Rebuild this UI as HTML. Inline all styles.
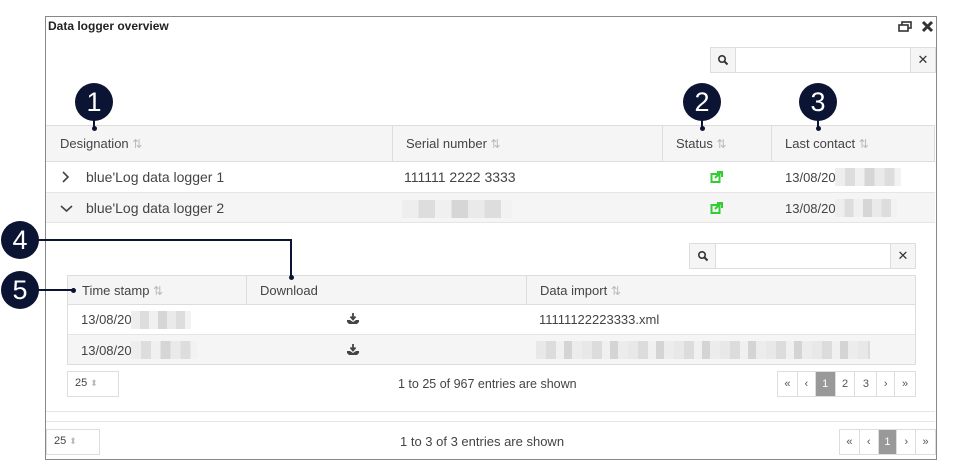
<!DOCTYPE html>
<html><head><meta charset="utf-8"><style>
*{box-sizing:border-box;margin:0;padding:0}
body{width:975px;height:475px;background:#fff;font-family:"Liberation Sans",sans-serif;position:relative;overflow:hidden;color:#333}
.a{position:absolute}
.t{font-size:13px;color:#444;white-space:nowrap}
.circ{position:absolute;width:38px;height:38px;border-radius:50%;background:#0b1433;color:#fff;font-size:27px;text-align:center;line-height:38px}
.dot{position:absolute;width:5px;height:5px;border-radius:50%;background:#0b1433}
.ln{position:absolute;background:#0b1433}
.s{color:#bbb;font-size:12px}
.blur{position:absolute;height:18px;background:linear-gradient(90deg,#eee 0 15%,#ddd 15% 30%,#f0f0f0 30% 45%,#d6d6d6 45% 60%,#eaeaea 60% 75%,#ddd 75% 90%,#f2f2f2 90%)}
.blur2{position:absolute;height:18px;background:repeating-linear-gradient(90deg,#e8e8e8 0 10px,#dcdcdc 10px 20px,#f0f0f0 20px 28px,#d4d4d4 28px 36px,#ececec 36px 46px)}
.pg{position:absolute;display:flex;border:1px solid #ddd;height:26px}
.pg div{border-right:1px solid #ddd;font-size:11px;color:#555;text-align:center;line-height:24px}
.pg div:last-child{border-right:none}
.pg .on{background:#999;color:#fff}
.box{position:absolute;border:1px solid #ddd}
</style></head><body>
<div class="a" style="left:45px;top:16px;width:892px;height:444px;border:1px solid #888"></div>
<div class="a" style="left:48px;top:19px;font-size:12px;font-weight:bold;color:#222">Data logger overview</div>
<svg class="a" style="left:898px;top:21px" width="14" height="12"><rect x="4" y="1" width="9" height="6" fill="none" stroke="#333" stroke-width="1.6"/><rect x="1" y="4" width="9" height="6" fill="#fff" stroke="#333" stroke-width="1.6"/></svg>
<svg class="a" style="left:921px;top:20px" width="13" height="13"><path d="M2 2L11 11M11 2L2 11" stroke="#333" stroke-width="3"/></svg>

<div class="box" style="left:710px;top:47px;width:226px;height:26px"></div>
<div class="a" style="left:710px;top:47px;width:26px;height:26px;background:#f5f5f5;border:1px solid #ddd"></div>
<div class="a" style="left:910px;top:47px;width:26px;height:26px;background:#f5f5f5;border:1px solid #ddd;text-align:center;line-height:24px;font-size:13px">✕</div>
<svg class="a" style="left:717px;top:54px" width="12" height="12"><circle cx="5" cy="5" r="3.2" fill="none" stroke="#333" stroke-width="1.6"/><path d="M7.5 7.5L10.5 10.5" stroke="#333" stroke-width="2"/></svg>

<div class="a" style="left:46px;top:125px;width:889px;height:37px;background:#f5f5f5;border-top:1px solid #ddd;border-bottom:1px solid #ddd"></div>
<div class="a" style="left:392px;top:126px;width:1px;height:35px;background:#ddd"></div>
<div class="a" style="left:662px;top:126px;width:1px;height:35px;background:#ddd"></div>
<div class="a" style="left:771px;top:126px;width:1px;height:35px;background:#ddd"></div>
<div class="a" style="left:934px;top:126px;width:1px;height:35px;background:#ddd"></div>
<div class="a t" style="left:60px;top:136px">Designation <span class="s">⇅</span></div>
<div class="a t" style="left:406px;top:136px">Serial number <span class="s">⇅</span></div>
<div class="a t" style="left:676px;top:136px">Status <span class="s">⇅</span></div>
<div class="a t" style="left:785px;top:136px">Last contact <span class="s">⇅</span></div>
<div class="a" style="left:46px;top:192px;width:889px;height:31px;background:#f5f5f5;border-top:1px solid #e5e5e5;border-bottom:1px solid #e5e5e5"></div>
<svg class="a" style="left:61px;top:171px" width="10" height="12"><path d="M2 1L7 6 2 11" stroke="#444" stroke-width="1.6" fill="none"/></svg>
<div class="a t" style="left:86px;top:169px;font-size:14px">blue'Log data logger 1</div>
<svg class="a" style="left:60px;top:204px" width="13" height="9"><path d="M1 2L6.5 7 12 2" stroke="#444" stroke-width="1.6" fill="none"/></svg>
<div class="a t" style="left:86px;top:200px;font-size:14px">blue'Log data logger 2</div>
<div class="a t" style="left:404px;top:169px;font-size:14px">111111 2222 3333</div>
<div class="blur" style="left:402px;top:200px;width:110px"></div>
<svg class="a" style="left:710px;top:171px" width="13" height="12"><rect x="1.5" y="3" width="8" height="8" fill="none" stroke="#3c3" stroke-width="2"/><path d="M5 7L11 1M7 1h5v5" stroke="#3c3" stroke-width="2" fill="none"/></svg>
<svg class="a" style="left:710px;top:202px" width="13" height="12"><rect x="1.5" y="3" width="8" height="8" fill="none" stroke="#3c3" stroke-width="2"/><path d="M5 7L11 1M7 1h5v5" stroke="#3c3" stroke-width="2" fill="none"/></svg>
<div class="a t" style="left:785px;top:170px">13/08/20</div><div class="blur" style="left:835px;top:168px;width:66px"></div>
<div class="a t" style="left:785px;top:201px">13/08/20</div><div class="blur" style="left:835px;top:199px;width:62px"></div>

<div class="box" style="left:689px;top:243px;width:227px;height:26px"></div>
<div class="a" style="left:689px;top:243px;width:27px;height:26px;background:#f5f5f5;border:1px solid #ddd"></div>
<div class="a" style="left:890px;top:243px;width:26px;height:26px;background:#f5f5f5;border:1px solid #ddd;text-align:center;line-height:24px;font-size:13px">✕</div>
<svg class="a" style="left:697px;top:250px" width="12" height="12"><circle cx="5" cy="5" r="3.2" fill="none" stroke="#333" stroke-width="1.6"/><path d="M7.5 7.5L10.5 10.5" stroke="#333" stroke-width="2"/></svg>

<div class="a" style="left:67px;top:275px;width:849px;height:90px;border:1px solid #ddd"></div>
<div class="a" style="left:68px;top:276px;width:847px;height:29px;background:#f5f5f5;border-bottom:1px solid #ddd"></div>
<div class="a" style="left:246px;top:276px;width:1px;height:28px;background:#ddd"></div>
<div class="a" style="left:526px;top:276px;width:1px;height:28px;background:#ddd"></div>
<div class="a" style="left:68px;top:334px;width:847px;height:30px;background:#f5f5f5;border-top:1px solid #e5e5e5"></div>
<div class="a t" style="left:82px;top:283px">Time stamp <span class="s">⇅</span></div>
<div class="a t" style="left:260px;top:283px">Download</div>
<div class="a t" style="left:540px;top:283px">Data import <span class="s">⇅</span></div>
<div class="a t" style="left:81px;top:312px">13/08/20</div><div class="blur" style="left:131px;top:311px;width:60px"></div>
<div class="a t" style="left:81px;top:343px">13/08/20</div><div class="blur" style="left:131px;top:341px;width:66px"></div>
<svg class="a" style="left:346px;top:313px" width="14" height="12"><path d="M7 0v6M4.5 3.5L7 6.5 9.5 3.5" stroke="#444" stroke-width="1.8" fill="none"/><path d="M1 7h3l3 2 3-2h3v2l-2 2H3L1 9z" fill="#444"/></svg>
<svg class="a" style="left:346px;top:344px" width="14" height="12"><path d="M7 0v6M4.5 3.5L7 6.5 9.5 3.5" stroke="#444" stroke-width="1.8" fill="none"/><path d="M1 7h3l3 2 3-2h3v2l-2 2H3L1 9z" fill="#444"/></svg>
<div class="a t" style="left:539px;top:312px">11111122223333.xml</div>
<div class="blur2" style="left:536px;top:341px;width:334px"></div>

<div class="box" style="left:67px;top:371px;width:52px;height:26px"></div>
<div class="a" style="left:75px;top:377px;font-size:11px;color:#444">25 <span style="color:#bbb;font-size:9px">⬍</span></div>
<div class="a t" style="left:398px;top:377px;font-size:12.5px">1 to 25 of 967 entries are shown</div>
<div class="pg" style="left:777px;top:371px;width:139px"><div style="width:20px">«</div><div style="width:18px">‹</div><div class="on" style="width:20px">1</div><div style="width:20px">2</div><div style="width:22px">3</div><div style="width:18px">›</div><div style="width:20px">»</div></div>

<div class="a" style="left:46px;top:411px;width:889px;height:1px;background:#e5e5e5"></div>
<div class="a" style="left:46px;top:421px;width:889px;height:1px;background:#e5e5e5"></div>
<div class="box" style="left:46px;top:429px;width:54px;height:26px"></div>
<div class="a" style="left:54px;top:435px;font-size:11px;color:#444">25 <span style="color:#bbb;font-size:9px">⬍</span></div>
<div class="a t" style="left:400px;top:434px;font-size:13px">1 to 3 of 3 entries are shown</div>
<div class="pg" style="left:839px;top:429px;width:97px"><div style="width:20px">«</div><div style="width:19px">‹</div><div class="on" style="width:19px">1</div><div style="width:19px">›</div><div style="width:19px">»</div></div>

<div class="circ" style="left:75px;top:83px">1</div><div class="ln" style="left:93px;top:118px;width:2px;height:10px"></div><div class="dot" style="left:92px;top:126px"></div>
<div class="circ" style="left:683px;top:83px">2</div><div class="ln" style="left:701px;top:118px;width:2px;height:10px"></div><div class="dot" style="left:700px;top:126px"></div>
<div class="circ" style="left:799px;top:83px">3</div><div class="ln" style="left:817px;top:118px;width:2px;height:10px"></div><div class="dot" style="left:816px;top:126px"></div>
<div class="circ" style="left:1px;top:221px">4</div>
<div class="ln" style="left:38px;top:239px;width:253px;height:2px"></div>
<div class="ln" style="left:290px;top:239px;width:2px;height:38px"></div><div class="dot" style="left:289px;top:275px"></div>
<div class="circ" style="left:1px;top:271px">5</div>
<div class="ln" style="left:38px;top:289px;width:35px;height:2px"></div><div class="dot" style="left:71px;top:288px"></div>
</body></html>
